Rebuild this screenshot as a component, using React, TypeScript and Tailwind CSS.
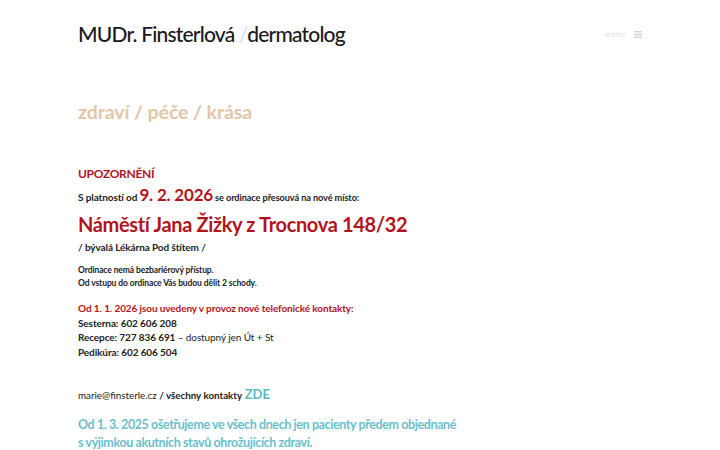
export default function App() {
  return (
    <div className="w-[720px] h-[450px] overflow-hidden bg-white text-[#222]" style={{ fontFamily: "Lato, 'Noto Sans', sans-serif" }}>
      <div className="pl-[78px] pr-[78px]">
        <header className="flex items-center justify-between pt-[20px]">
          <div className="text-[21px] leading-[28px] font-medium text-[#1a1a1a] tracking-[-0.8px]">
            MUDr. Finsterlová <span className="text-[#a9d4dc] font-light">/</span>dermatolog
          </div>
          <div className="flex items-center gap-[8px] pr-[0px]">
            <span className="text-[7px] tracking-[1px] text-[#dcdcdc]">menu</span>
            <svg width="8" height="7" viewBox="0 0 8 7">
              <rect x="0" y="0" width="8" height="1.5" fill="#d4d4d4" />
              <rect x="0" y="2.75" width="8" height="1.5" fill="#d4d4d4" />
              <rect x="0" y="5.5" width="8" height="1.5" fill="#d4d4d4" />
            </svg>
          </div>
        </header>
        <h2 className="mt-[50px] text-[19.5px] leading-[28px] font-bold text-[#e2c6a6] tracking-[-0.1px]">zdraví / péče / krása</h2>
        <div className="mt-[40px] text-[12px] leading-[16px] font-bold text-[#b3141c] tracking-[-0.3px]">UPOZORNĚNÍ</div>
        <div className="mt-[3px] text-[9.2px] leading-[20px] font-bold text-[#222] tracking-[-0.1px]">
          <span className="text-[10px]">S platností od</span> <span className="text-[17px] text-[#b3141c] tracking-[-0.2px]">9. 2. 2026</span> se ordinace přesouvá na nové místo:
        </div>
        <div className="mt-[3px] text-[20px] leading-[26px] font-bold text-[#b3141c] tracking-[-0.35px]">Náměstí Jana Žižky z Trocnova 148/32</div>
        <div className="mt-[3px] text-[10px] leading-[14px] font-bold text-[#222] tracking-[-0.1px]">/ bývalá Lékárna Pod štítem /</div>
        <div className="mt-[10px] text-[8.5px] leading-[13px] font-bold text-[#222] tracking-[-0.1px]">
          <div>Ordinace nemá bezbariérový přístup.</div>
          <div>Od vstupu do ordinace Vás budou dělit 2 schody.</div>
        </div>
        <div className="mt-[11px] text-[10px] leading-[14.7px] font-bold tracking-[-0.1px]">
          <div className="text-[#b3141c]">Od 1. 1. 2026 jsou uvedeny v provoz nové telefonické kontakty:</div>
          <div>Sesterna: 602 606 208</div>
          <div>Recepce: 727 836 691 <span className="font-normal">– dostupný jen Út + St</span></div>
          <div>Pedikúra: 602 606 504</div>
        </div>
        <div className="mt-[25px] text-[9.8px] leading-[18px] text-[#222]">
          marie@finsterle.cz <span className="font-bold">/ všechny kontakty</span> <span className="text-[13px] font-bold text-[#5bbac6]">ZDE</span>
        </div>
        <div className="mt-[12px] text-[12.5px] leading-[18px] font-bold text-[#6bbfca] tracking-[-0.4px]">
          <div>Od 1. 3. 2025 ošetřujeme ve všech dnech jen pacienty předem objednané</div>
          <div>s výjimkou akutních stavů ohrožujících zdraví.</div>
        </div>
      </div>
    </div>
  );
}
